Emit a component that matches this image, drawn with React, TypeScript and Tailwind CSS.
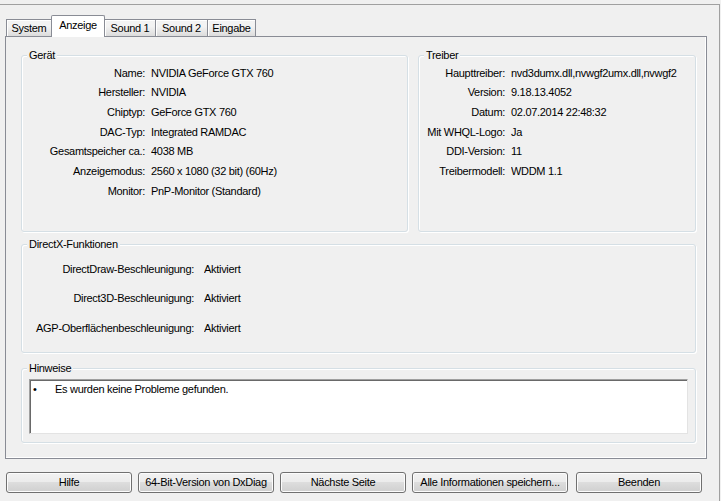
import React from 'react'

const tabs = [
  { label: 'System', width: 'w-[46px]' },
  { label: 'Anzeige', width: 'w-[54px]', active: true },
  { label: 'Sound 1', width: 'w-[52px]' },
  { label: 'Sound 2', width: 'w-[53px]' },
  { label: 'Eingabe', width: 'w-[49px]' },
]

const device = [
  ['Name:', 'NVIDIA GeForce GTX 760'],
  ['Hersteller:', 'NVIDIA'],
  ['Chiptyp:', 'GeForce GTX 760'],
  ['DAC-Typ:', 'Integrated RAMDAC'],
  ['Gesamtspeicher ca.:', '4038 MB'],
  ['Anzeigemodus:', '2560 x 1080 (32 bit) (60Hz)'],
  ['Monitor:', 'PnP-Monitor (Standard)'],
]

const driver = [
  ['Haupttreiber:', 'nvd3dumx.dll,nvwgf2umx.dll,nvwgf2'],
  ['Version:', '9.18.13.4052'],
  ['Datum:', '02.07.2014 22:48:32'],
  ['Mit WHQL-Logo:', 'Ja'],
  ['DDI-Version:', '11'],
  ['Treibermodell:', 'WDDM 1.1'],
]

const features = [
  ['DirectDraw-Beschleunigung:', 'Aktiviert'],
  ['Direct3D-Beschleunigung:', 'Aktiviert'],
  ['AGP-Oberflächenbeschleunigung:', 'Aktiviert'],
]

const buttons = [
  { label: 'Hilfe', width: 'w-[126px]' },
  { label: '64-Bit-Version von DxDiag', width: 'w-[136px]' },
  { label: 'Nächste Seite', width: 'w-[126px]' },
  { label: 'Alle Informationen speichern...', width: 'w-[156px]' },
  { label: 'Beenden', width: 'w-[126px] ml-[2px]' },
]

function GroupBox({ title, className, children }: { title: string; className: string; children: React.ReactNode }) {
  return (
    <div className={`relative rounded-[3px] border border-[#d5dfe5] shadow-[inset_1px_1px_0_#fff,1px_1px_0_#fff] ${className}`}>
      <span className="absolute -top-[8px] left-[5px] bg-[#f0f0f0] px-[2px] leading-[14px]">{title}</span>
      {children}
    </div>
  )
}

function Rows({ rows, labelCol, gap, rowH }: { rows: string[][]; labelCol: string; gap: string; rowH: string }) {
  return (
    <div className={`grid ${labelCol} ${gap}`}>
      {rows.map(([k, v]) => (
        <React.Fragment key={k}>
          <div className={`${rowH} flex items-center justify-end whitespace-nowrap`}>{k}</div>
          <div className={`${rowH} flex items-center overflow-hidden whitespace-nowrap`}>{v}</div>
        </React.Fragment>
      ))}
    </div>
  )
}

export default function App() {
  return (
    <div className="w-[721px] h-[501px] overflow-hidden bg-[#f0f0f0] pt-[4px] text-[11px] tracking-[-0.3px] text-black font-['Liberation_Sans',Arial,sans-serif]">
      <div className="w-[720px] h-[497px] border-t border-r border-[#a0a0a0]">
        {/* tab strip */}
        <div className="relative z-10 mt-[10px] flex h-[21px] items-end pl-[6px]">
          {tabs.map((t, i) => (
            <div
              key={t.label}
              className={`${t.width} ${i > 0 ? '-ml-px' : ''} flex items-center justify-center border border-b-0 border-[#898c95] ${
                t.active
                  ? 'relative z-10 -mb-px h-[22px] rounded-t-[2px] bg-white pb-[3px]'
                  : 'h-[17px] bg-gradient-to-b from-[#f3f3f3] from-40% to-[#dcdcdc] shadow-[inset_1px_1px_0_#fff]'
              }`}
            >
              {t.label}
            </div>
          ))}
        </div>

        {/* tab page */}
        <div className="ml-[5px] h-[423px] w-[702px] border border-[#898c95] shadow-[inset_-1px_-1px_0_#fff] pl-[15px] pt-[18px]">
          <div className="flex gap-[10px]">
            <GroupBox title="Gerät" className="h-[177px] w-[387px]">
              <div className="pt-[7px]">
                <Rows rows={device} labelCol="grid-cols-[123px_1fr]" gap="gap-x-[6px]" rowH="h-[19.67px]" />
              </div>
            </GroupBox>
            <GroupBox title="Treiber" className="h-[177px] w-[278px]">
              <div className="pt-[7px] pr-[3px]">
                <Rows rows={driver} labelCol="grid-cols-[86px_1fr]" gap="gap-x-[6px]" rowH="h-[19.67px]" />
              </div>
            </GroupBox>
          </div>

          <GroupBox title="DirectX-Funktionen" className="mt-[12px] h-[109px] w-[675px]">
            <div className="pt-[9px]">
              <Rows rows={features} labelCol="grid-cols-[172px_1fr]" gap="gap-x-[10px]" rowH="h-[29.5px]" />
            </div>
          </GroupBox>

          <GroupBox title="Hinweise" className="mt-[15px] h-[75px] w-[675px]">
            <div className="px-[7px] pt-[10px]">
              <div className="h-[55px] w-[659px] border border-t-[#a0a0a0] border-l-[#a0a0a0] border-r-[#e3e3e3] border-b-[#e3e3e3] bg-white shadow-[inset_1px_1px_0_#696969]">
                <div className="flex items-center pt-[2px] leading-[14px]">
                  <span className="w-[25px] pl-[3px]">•</span>
                  <span>Es wurden keine Probleme gefunden.</span>
                </div>
              </div>
            </div>
          </GroupBox>
        </div>

        {/* bottom buttons */}
        <div className="mt-[13px] flex gap-[6px] pl-[6px]">
          {buttons.map((b) => (
            <button
              key={b.label}
              className={`${b.width} h-[21px] rounded-[3px] border border-[#707070] bg-[linear-gradient(#f2f2f2,#ebebeb_50%,#dddddd_50%,#cfcfcf)] shadow-[inset_0_0_0_1px_#fcfcfc] leading-none whitespace-nowrap`}
            >
              {b.label}
            </button>
          ))}
        </div>
      </div>
    </div>
  )
}
